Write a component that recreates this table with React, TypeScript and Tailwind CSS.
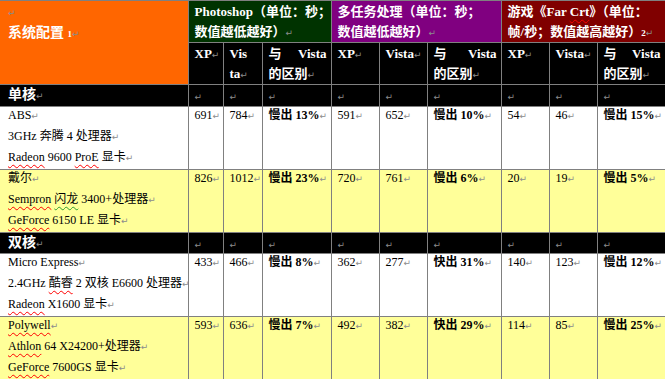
import React from "react";

type Row = {
  lines: React.ReactNode[];
  vals: string[];
  bg: string;
};

const Mark = () => (
  <span className="font-['DejaVu_Sans'] text-[9px] leading-none font-normal text-[#8c8c8c]">↵</span>
);

const Red = ({ children }: { children: React.ReactNode }) => (
  <span className="underline decoration-wavy decoration-[#ff0000] decoration-1 underline-offset-[3px]">
    {children}
  </span>
);

const Green = ({ children }: { children: React.ReactNode }) => (
  <span className="underline decoration-wavy decoration-[#2e9b2e] decoration-1 underline-offset-[3px]">
    {children}
  </span>
);

const groups: { label: string; rowH: string; rows: Row[] }[] = [
  {
    label: "单核",
    rowH: "h-[22px]",
    rows: [
      {
        bg: "bg-white",
        lines: [
          "ABS",
          "3GHz 奔腾 4 处理器",
          <>
            <Red>Radeon</Red> 9600 <Red>ProE</Red> 显卡
          </>,
        ],
        vals: ["691", "784", "慢出 13%", "591", "652", "慢出 10%", "54", "46", "慢出 15%"],
      },
      {
        bg: "bg-[#ffff99]",
        lines: [
          "戴尔",
          <>
            <Red>Sempron</Red> <Green>闪龙</Green> 3400+处理器
          </>,
          <>
            <Red>GeForce</Red> 6150 LE 显卡
          </>,
        ],
        vals: ["826", "1012", "慢出 23%", "720", "761", "慢出 6%", "20", "19", "慢出 5%"],
      },
    ],
  },
  {
    label: "双核",
    rowH: "h-[21px]",
    rows: [
      {
        bg: "bg-white",
        lines: [
          "Micro Express",
          <>
            2.4GHz <Red>酷睿</Red> 2 双核 E6600 处理器
          </>,
          <>
            <Red>Radeon</Red> X1600 显卡
          </>,
        ],
        vals: ["433", "466", "慢出 8%", "362", "277", "快出 31%", "140", "123", "慢出 12%"],
      },
      {
        bg: "bg-[#ffff99]",
        lines: [
          <Red>Polywell</Red>,
          <>
            <Red>Athlon</Red> 64 X24200+处理器
          </>,
          <>
            <Red>GeForce</Red> 7600GS 显卡
          </>,
        ],
        vals: ["593", "636", "慢出 7%", "492", "382", "快出 29%", "114", "85", "慢出 25%"],
      },
    ],
  },
];

const cell = "border border-[#808080] align-top p-0";

const Diff = () => (
  <div className="leading-[21px]">
    <div className="flex h-[20px] justify-between">
      <span>与</span>
      <span>Vista</span>
    </div>
    <div className="h-[20px]">
      的区别
      <Mark />
    </div>
  </div>
);

const Head = ({ children }: { children: React.ReactNode }) => (
  <div className="h-[20px] whitespace-nowrap">{children}</div>
);

export default function App() {
  return (
    <div className="w-[665px] h-[379px] overflow-hidden bg-white font-['Liberation_Serif','Noto_Sans_CJK_SC',serif] text-black">
      <table className="table-fixed border-collapse w-[665px] border-t border-[#808080]">
        <colgroup>
          <col className="w-[188px]" />
          <col className="w-[35px]" />
          <col className="w-[39px]" />
          <col className="w-[69px]" />
          <col className="w-[48px]" />
          <col className="w-[48px]" />
          <col className="w-[74px]" />
          <col className="w-[48px]" />
          <col className="w-[48px]" />
          <col className="w-[68px]" />
        </colgroup>
        <tbody>
          <tr className="h-[42px] text-[13px] font-bold text-white leading-[20px]">
            <td rowSpan={2} className={`${cell} border-l-0 bg-[#ff6600] pl-[8px] text-[14px] leading-[21px]`}>
              <div className="h-[21px]">
                <Mark />
              </div>
              <div className="h-[21px]">
                系统配置 <span className="text-[9px]">1</span>
                <Mark />
              </div>
            </td>
            <td colSpan={3} className={`${cell} bg-[#003300] pl-[6px] pt-px`}>
              <Head>Photoshop（单位：秒；</Head>
              <Head>
                数值越低越好）
                <Mark />
              </Head>
            </td>
            <td colSpan={3} className={`${cell} bg-[#800080] pl-[6px] pt-px`}>
              <Head>多任务处理（单位：秒；</Head>
              <Head>
                数值越低越好）
                <Mark />
              </Head>
            </td>
            <td colSpan={3} className={`${cell} bg-[#800000] pl-[6px] pt-px`}>
              <Head>
                游戏《Far <Red>Crt</Red>》（单位：
              </Head>
              <Head>
                帧/秒；数值越高越好）<span className="text-[9px]">2</span>
                <Mark />
              </Head>
            </td>
          </tr>
          <tr className="h-[42px] bg-black text-[13px] font-bold text-white leading-[21px]">
            <td className={`${cell} pl-[6px]`}>
              <Head>
                XP
                <Mark />
              </Head>
            </td>
            <td className={`${cell} pl-[6px]`}>
              <Head>Vis</Head>
              <Head>
                ta
                <Mark />
              </Head>
            </td>
            <td className={`${cell} pl-[6px] pr-[4px]`}>
              <Diff />
            </td>
            <td className={`${cell} pl-[6px]`}>
              <Head>
                XP
                <Mark />
              </Head>
            </td>
            <td className={`${cell} pl-[6px]`}>
              <Head>
                Vista
                <Mark />
              </Head>
            </td>
            <td className={`${cell} pl-[6px] pr-[4px]`}>
              <Diff />
            </td>
            <td className={`${cell} pl-[6px]`}>
              <Head>
                XP
                <Mark />
              </Head>
            </td>
            <td className={`${cell} pl-[6px]`}>
              <Head>
                Vista
                <Mark />
              </Head>
            </td>
            <td className={`${cell} pl-[6px] pr-[4px]`}>
              <Diff />
            </td>
          </tr>
          {groups.map((g) => (
            <React.Fragment key={g.label}>
              <tr className={`${g.rowH} bg-black leading-[19px]`}>
                <td className={`${cell} border-l-0 pl-[8px] text-[14px] font-bold text-white`}>
                  <div className="h-[19px]">
                    {g.label}
                    <Mark />
                  </div>
                </td>
                {Array.from({ length: 9 }).map((_, i) => (
                  <td key={i} className={`${cell} pl-[6px]`}>
                    <div className="h-[19px]">
                      <Mark />
                    </div>
                  </td>
                ))}
              </tr>
              {g.rows.map((r, ri) => (
                <tr key={ri} className={`h-[63px] ${r.bg} text-[12px] leading-[17px]`}>
                  <td className={`${cell} border-l-0 pl-[8px] whitespace-nowrap`}>
                    {r.lines.map((l, li) => (
                      <div key={li} className="h-[20px] mb-px last:mb-0">
                        {l}
                        <Mark />
                      </div>
                    ))}
                  </td>
                  {r.vals.map((v, vi) => (
                    <td
                      key={vi}
                      className={`${cell} pl-[6px] whitespace-nowrap ${vi % 3 === 2 ? "font-bold" : ""}`}
                    >
                      <div className="h-[20px]">
                        {v}
                        <Mark />
                      </div>
                    </td>
                  ))}
                </tr>
              ))}
            </React.Fragment>
          ))}
        </tbody>
      </table>
    </div>
  );
}
